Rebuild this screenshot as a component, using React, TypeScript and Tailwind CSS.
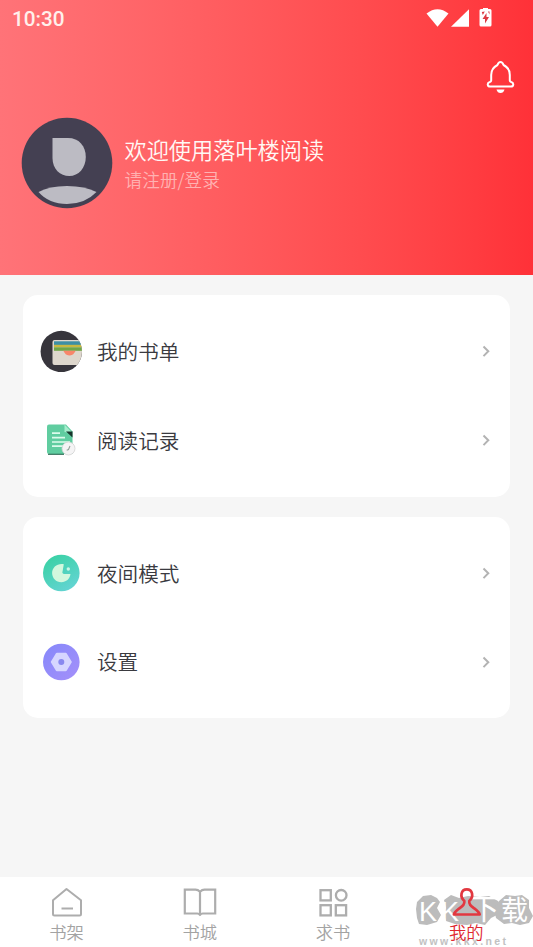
import type { ReactNode } from "react";

interface MenuItem {
  label: string;
  icon: ReactNode;
}

interface TabItem {
  label: string;
  icon: ReactNode;
  active?: boolean;
}

const WalletIcon = () => (
  <svg width="42" height="42" viewBox="0 0 42 42">
    <defs>
      <clipPath id="wallet">
        <circle cx="21.300" cy="21.500" r="20.700" />
      </clipPath>
    </defs>
    <g clipPath="url(#wallet)">
      <rect width="42" height="42" fill="#37353c" />
      <rect x="12.500" y="10" width="34" height="25" rx="2" fill="#ded7cd" />
      <rect x="14" y="11.300" width="30" height="4" fill="#3d8fa5" />
      <rect x="14" y="14.800" width="30" height="2.500" fill="#c9b840" />
      <rect x="14" y="17.300" width="30" height="3.500" fill="#6fa648" />
      <path d="M23 20.800h13c-1.300.5-1.800 4.800-6.500 4.800S24.300 21.300 23 20.800z" fill="#f8866a" />
    </g>
  </svg>
);

const RecordIcon = () => (
  <svg width="42" height="42" viewBox="0 0 42 42">
    <path d="M9 5.500h17l6.500 7v22.500H9a2 2 0 0 1-2-2V7.500a2 2 0 0 1 2-2z" fill="#60cda0" />
    <path d="M8 35.300h16" stroke="#34705a" strokeWidth="1.200" />
    <path d="M24.500 5.500l8 8.500-8-1z" fill="#a6edcd" />
    <path d="M26 12.500h6.500v6z" fill="#16352b" />
    <path d="M12 14.200h8M12 18.700h13M12 23h18M12 27.200h11" stroke="#dcfbec" strokeWidth="1.700" />
    <circle cx="28.500" cy="29.500" r="6.500" fill="#f5f4f5" stroke="#d3d3d3" strokeWidth=".8" />
    <path d="M30 27l-1.500 3.500-1.800.8" fill="none" stroke="#92a198" strokeWidth="1.100" />
  </svg>
);

const NightIcon = () => (
  <svg width="42" height="42" viewBox="0 0 42 42">
    <defs>
      <linearGradient id="night" x1="0" y1="0" x2="0.600" y2="1">
        <stop offset="0" stopColor="#35d19f" />
        <stop offset="1" stopColor="#62d4d1" />
      </linearGradient>
    </defs>
    <circle cx="21.300" cy="21" r="18.300" fill="url(#night)" />
    <path
      d="M23.800 12.200c-6.300-1.200-11.700 3-11.700 8.800 0 5.100 4 9.200 9.200 9.200 4.900 0 8.600-3.400 9.200-8.200h-6.300c-1.500 0-2.300-1.400-1.600-2.700z"
      fill="#d3f8de"
    />
    <circle cx="28.300" cy="17" r="1.700" fill="#c9f5e5" />
  </svg>
);

const SettingsIcon = () => (
  <svg width="42" height="42" viewBox="0 0 42 42">
    <defs>
      <linearGradient id="settings" x1="0" y1="0" x2="1" y2="1">
        <stop offset="0" stopColor="#8588fa" />
        <stop offset="1" stopColor="#a590fa" />
      </linearGradient>
    </defs>
    <circle cx="21.300" cy="21" r="18.300" fill="url(#settings)" />
    <path
      d="M16.800 12.800h9l5 8.200-5 8.200h-9l-5-8.200z"
      fill="#d6d6ff"
      stroke="#d6d6ff"
      strokeWidth="2"
      strokeLinejoin="round"
    />
    <circle cx="21.300" cy="21" r="3" fill="#8888ef" />
  </svg>
);

const HomeIcon = () => (
  <svg width="32" height="32" viewBox="0 0 32 32" fill="none" stroke="#adadad" strokeWidth="2">
    <path d="M2 14.300L15.500 3 30 14.300V28q0 1.500-1.500 1.500h-25Q2 29.500 2 28z" strokeLinejoin="round" />
    <path d="M10.500 22.500h11.500" />
  </svg>
);

const BookIcon = () => (
  <svg width="34" height="32" viewBox="0 0 34 32" fill="none" stroke="#adadad" strokeWidth="2.200">
    <path d="M17 5.700Q15 3.700 12.500 3.700H1.800v23.800h12.500q1.500 0 2.700 1.200 1.200-1.200 2.700-1.200h12.500V3.700H21.500Q19 3.700 17 5.700zv24" />
  </svg>
);

const GridIcon = () => (
  <svg width="32" height="32" viewBox="0 0 32 32" fill="none" stroke="#adadad" strokeWidth="2.300">
    <rect x="3.500" y="4.200" width="10.300" height="10.200" />
    <circle cx="24.200" cy="9.300" r="5.300" />
    <rect x="3.500" y="19.200" width="10.300" height="10.200" />
    <rect x="18.800" y="19.200" width="10.300" height="10.200" />
  </svg>
);

const UserIcon = () => (
  <svg width="32" height="32" viewBox="0 0 32 32" fill="none" stroke="#e23840" strokeWidth="2.700" strokeLinejoin="round">
    <path d="M14.300 15C9.500 10.500 11 3.300 16.800 3.300S24.100 10.500 19.300 15c-.5 3.500 1.500 4.800 5 7.400 3 2.200 4.900 3.600 5.400 6.100H3.900c.5-2.500 2.400-3.900 5.400-6.100C12.800 19.800 14.800 18.500 14.300 15z" />
  </svg>
);

const Watermark = () => (
  <svg className="absolute top-0 right-0" width="120" height="70" viewBox="0 0 120 70">
    <g fill="#bcbcbc">
      <path d="M10 19l8-1 6 3 3 4-3 6 4 7-4 7-10 3-8-1-2-6-1-9 1-7z" />
      <path d="M31 23l7-5 8 3 9-2 12 1 9-1 9 5 4 7-3 6-8 4-6 7-9-2-9 2-12-1-9-3-2-7 2-6z" />
      <path d="M86 24l7-6 9 1 7-1 7 5v8l4 8-4 7-9 2-8-2-8 1-8-6-2-9z" />
    </g>
    <g fill="#fff" className="font-['Liberation_Sans','Noto_Sans_CJK_SC',sans-serif] font-normal">
      <text x="6" y="44" fontSize="27">K</text>
      <text x="28" y="44" fontSize="27">K</text>
      <text x="57" y="43" fontSize="29">下</text>
      <text x="88" y="43" fontSize="27">载</text>
    </g>
    <text
      x="6"
      y="67.500"
      fontSize="10.500"
      textLength="87"
      fontWeight="bold"
      fill="#c2c2c2"
      className="font-['Liberation_Sans',sans-serif]"
    >
      www.kkx.net
    </text>
  </svg>
);

const StatusBar = () => (
  <div className="flex h-[38px] items-center justify-between pl-3 pr-[41px]">
    <span className="font-[Roboto,sans-serif] text-[20.700px] font-medium leading-none text-[#fff0ec]">10:30</span>
    <svg width="66" height="22" viewBox="0 0 66 22" fill="#fff">
      <path d="M0.500 5.500Q11.500 -3 22.500 5.500L11.500 18.700z" />
      <path d="M43 1.300v17.500H25z" />
      <path d="M57 -1h5v2h2q1.500 0 1.500 1.500v14.500q0 1.500-1.500 1.500h-9q-1.500 0-1.500-1.500V2.500Q53.500 1 55 1h2z" />
      <path d="M60.500 5l-4 6h2.500v4.500l4-6.500h-2.500zM55.800 4l3-.5-2 3.500zM62 3.500h1.500v3z" fill="#dc3942" />
    </svg>
  </div>
);

const Header = () => (
  <header className="h-[275px] bg-linear-to-r from-[#ff7378] to-[#ff3138]">
    <StatusBar />
    <div className="flex h-[79px] justify-end pr-[17px] pt-[22px]">
      <svg width="30" height="36" viewBox="0 0 30 36" fill="none" stroke="#fff" strokeWidth="2">
        <path
          d="M11.500 5Q12.500 2 14.500 2T17.500 5C21.500 7 23.800 11 23.800 15v5.500q0 1 1.400 1.500c3 .8 2.600 4.500-.4 4.500H4.200c-3 0-3.400-3.700-.4-4.500q1.400-.5 1.400-1.500V15c0-4 2.300-8 6.300-10z"
          strokeLinejoin="round"
        />
        <path d="M10.500 29.500h8q-1 3.500-4 3.500t-4-3.500z" fill="#fff" stroke="none" />
      </svg>
    </div>
    <div className="flex items-center pl-[21px]">
      <svg width="92" height="92" viewBox="0 0 92 92">
        <circle cx="46" cy="46" r="45.300" fill="#444052" />
        <path d="M31.500 21H47c11 0 17.800 8 17.800 19S57.500 59 48.300 59s-16.800-7-16.800-18z" fill="#bcbbc3" />
        <path d="M17.500 75Q28 69 46 69t29.500 6Q64 87 46 87T17.500 75z" fill="#bcbbc3" />
      </svg>
      <div className="ml-[11.500px] pt-0.5">
        <div className="text-[22.200px] font-[350] leading-[31px] text-[#fff8f5]">欢迎使用落叶楼阅读</div>
        <div className="text-[17.700px] font-[350] leading-[29px] text-[#ffb2b2]">请注册/登录</div>
      </div>
    </div>
  </header>
);

const MenuCard = ({ items }: { items: MenuItem[] }) => (
  <section className="rounded-[15px] bg-white py-3">
    {items.map((item) => (
      <div key={item.label} className="flex h-[88.800px] items-center pl-[17px] pr-[19px]">
        {item.icon}
        <span className="ml-[15px] flex-1 text-[20.600px] font-[350] text-[#3a3a3f]">{item.label}</span>
        <svg width="10" height="14" viewBox="0 0 10 14" fill="none" stroke="#b3b3b3" strokeWidth="2">
          <path d="M2.500 2.500l4.800 4.800-4.800 4.800" />
        </svg>
      </div>
    ))}
  </section>
);

const TabBar = ({ tabs }: { tabs: TabItem[] }) => (
  <nav className="relative grid h-[70px] grid-cols-4 bg-white">
    <Watermark />
    {tabs.map((tab) => (
      <div key={tab.label} className="relative flex flex-col items-center pt-[9px]">
        {tab.icon}
        <span
          className={
            tab.active
              ? "text-[17.300px] font-[350] leading-7 text-[#e02830]"
              : "text-[17.300px] font-[350] leading-7 text-[#a3a3a3]"
          }
        >
          {tab.label}
        </span>
      </div>
    ))}
  </nav>
);

const libraryItems: MenuItem[] = [
  { label: "我的书单", icon: <WalletIcon /> },
  { label: "阅读记录", icon: <RecordIcon /> },
];

const preferenceItems: MenuItem[] = [
  { label: "夜间模式", icon: <NightIcon /> },
  { label: "设置", icon: <SettingsIcon /> },
];

const tabs: TabItem[] = [
  { label: "书架", icon: <HomeIcon /> },
  { label: "书城", icon: <BookIcon /> },
  { label: "求书", icon: <GridIcon /> },
  { label: "我的", icon: <UserIcon />, active: true },
];

const App = () => {
  return (
    <div className="flex h-screen flex-col overflow-hidden bg-[#f6f6f6] font-['Noto_Sans_CJK_SC',sans-serif]">
      <Header />
      <main className="flex flex-1 flex-col gap-5 px-[23px] pt-5">
        <MenuCard items={libraryItems} />
        <MenuCard items={preferenceItems} />
      </main>
      <TabBar tabs={tabs} />
    </div>
  );
};

export default App;
